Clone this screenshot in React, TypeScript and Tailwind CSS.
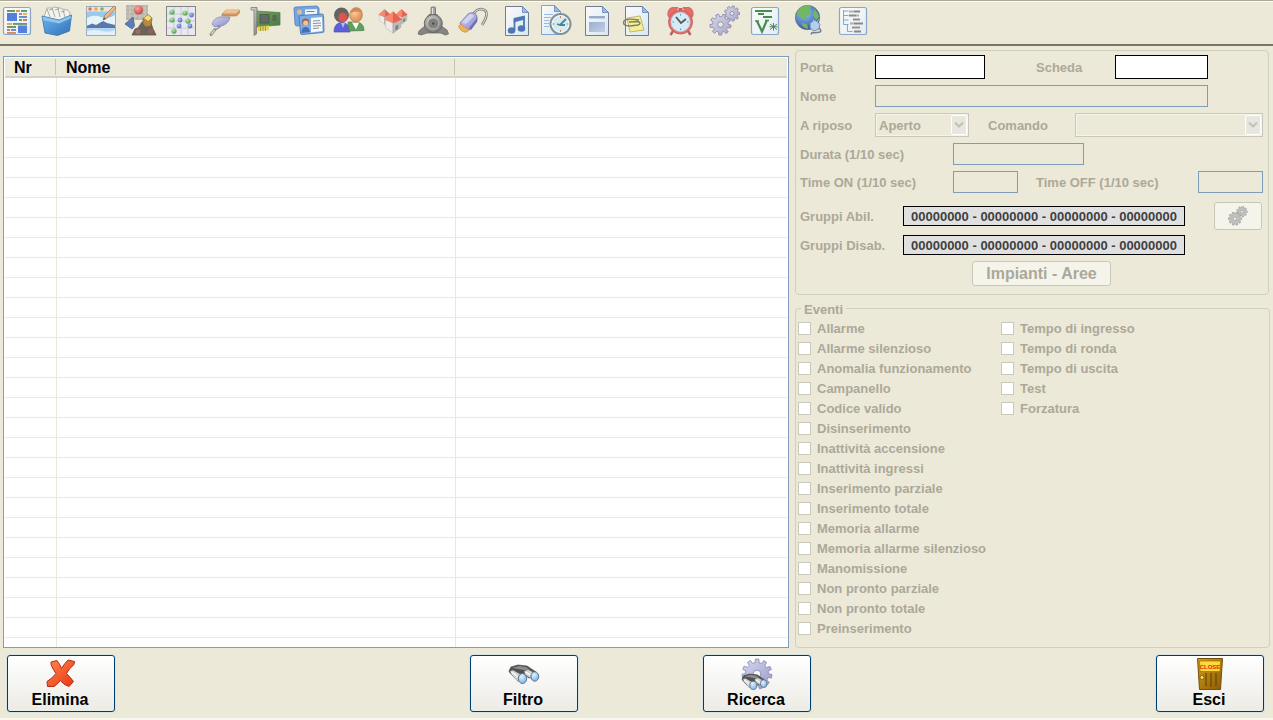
import React from 'react';

/* ---------- drawing helpers ---------- */

function gearPath(cx: number, cy: number, outer: number, inner: number, teeth: number, turn = 0): string {
  const points: string[] = [];
  const step = (Math.PI * 2) / teeth;
  for (let i = 0; i < teeth; i++) {
    const a = i * step + turn;
    const corners: [number, number][] = [
      [inner, a - step * 0.3],
      [outer, a - step * 0.2],
      [outer, a + step * 0.2],
      [inner, a + step * 0.3],
    ];
    for (const [r, t] of corners) {
      points.push(`${(cx + r * Math.cos(t)).toFixed(2)},${(cy + r * Math.sin(t)).toFixed(2)}`);
    }
  }
  return `M${points.join('L')}Z`;
}

type GearProps = { cx: number; cy: number; outer: number; inner: number; teeth: number; hole: number; fill: string; stroke: string; turn?: number };

function Gear({ cx, cy, outer, inner, teeth, hole, fill, stroke, turn }: GearProps) {
  const ring = `M${cx - hole},${cy}a${hole},${hole} 0 1,0 ${hole * 2},0a${hole},${hole} 0 1,0 ${-hole * 2},0Z`;
  return <path d={gearPath(cx, cy, outer, inner, teeth, turn) + ring} fill={fill} stroke={stroke} strokeWidth="0.9" fillRule="evenodd" strokeLinejoin="round" />;
}

function SharedGradients() {
  const stops = (id: string, a: string, b: string) => (
    <linearGradient id={id} x1="0" y1="0" x2="1" y2="1">
      <stop offset="0" stopColor={a} />
      <stop offset="1" stopColor={b} />
    </linearGradient>
  );
  const ball = (id: string, a: string, b: string) => (
    <radialGradient id={id} cx="0.38" cy="0.32" r="0.7">
      <stop offset="0" stopColor={a} />
      <stop offset="1" stopColor={b} />
    </radialGradient>
  );
  return (
    <svg width="0" height="0" className="absolute" aria-hidden="true">
      <defs>
        {stops('gPaper', '#ffffff', '#d4e6f8')}
        {stops('gFrame', '#ffffff', '#e0edfb')}
        {stops('gBox', '#58aef0', '#0f5cb4')}
        {stops('gGear', '#d8d8f0', '#9a9ac8')}
        {stops('gPurple', '#d0d2f8', '#7678c4')}
        {stops('gSteel', '#e4e4e4', '#707070')}
        {stops('gBoard', '#5a9a4c', '#2c6828')}
        {stops('gRed', '#ff8a50', '#e83410')}
        {stops('gDoor', '#d49c18', '#8a5c08')}
        {stops('gBlock', '#8ea4d0', '#bccbe8')}
        {ball('bRed', '#ff9a94', '#c02828')}
        {ball('bGreen', '#a8f0a0', '#2c9030')}
        {ball('bBlue', '#a4bcff', '#3450b0')}
        {ball('bGlobe', '#7cc0ff', '#1c3c9c')}
        {ball('bLens', '#e4f4ff', '#74b4f0')}
        {ball('bFace', '#ffc894', '#d87838')}
        {ball('bSteel', '#c8c8c8', '#686868')}
      </defs>
    </svg>
  );
}

function Page() {
  return (
    <>
      <path d="M3.5.5h17l6 6v23h-23z" fill="url(#gPaper)" stroke="#5c6a82" />
      <path d="M20.5.5v6h6z" fill="#8fb4e4" stroke="#4c74b4" strokeWidth="0.8" />
    </>
  );
}

function Frame() {
  return <rect x="1.5" y="1.5" width="27" height="27" rx="2" fill="url(#gFrame)" stroke="#7c9cc4" strokeWidth="1.2" />;
}

function House({ x, y, s }: { x: number; y: number; s: number }) {
  return (
    <g transform={`translate(${x} ${y}) scale(${s})`}>
      <path d="M-8 2v9l8 6V5z" fill="#ececec" stroke="#a0a0a0" strokeWidth="0.5" />
      <path d="M8 2v9l-8 6V5z" fill="#b4b4b4" stroke="#8c8c8c" strokeWidth="0.5" />
      <path d="M2.5 9.500l3-1.700v4.700l-3 1.800z" fill="#707070" />
      <path d="M0-6L-9.500 2.500 0 6.500z" fill="#f87860" />
      <path d="M0-6L9.500 2.500 0 6.500z" fill="#e44c3c" />
    </g>
  );
}

function Binoculars() {
  return (
    <>
      <path d="M0 6l2-4 7-2 9 1 9 6-1 4-6 2-4-3-4 4-5-1L1 8z" fill="#505050" stroke="#3a3a3a" strokeWidth="0.6" strokeLinejoin="round" />
      <path d="M3 3l7-2 7 1 4 3-6 0-6-1z" fill="#8c8c8c" />
      <path d="M1 6l3-1 8 4.500-3 7L2 9zM15 6l4-1.500 7 3.500-3 6-7-4z" fill="#d4d4d4" stroke="#606060" strokeWidth="0.5" />
      <path d="M2.500 7l6 4.500M16.500 7l5 3" stroke="#fff" strokeWidth="1.200" />
      <ellipse cx="13.500" cy="13.500" rx="4.200" ry="5" fill="url(#bLens)" stroke="#5c6470" strokeWidth="0.9" />
      <ellipse cx="25.800" cy="11.500" rx="3.900" ry="4.700" fill="url(#bLens)" stroke="#5c6470" strokeWidth="0.9" />
    </>
  );
}

/* ---------- toolbar icons, each on a 30 x 30 grid ---------- */

const bars = (list: [number, number, number, string][], h = 1.5) =>
  list.map(([x, y, w, c], i) => <rect key={i} x={x} y={y} width={w} height={h} fill={c} />);

const icons: Record<string, React.ReactNode> = {
  Pannello: (
    <>
      <Frame />
      {bars([[5, 4, 8, '#4c8850'], [14, 4, 4, '#e08038'], [19, 4, 6, '#4c8850'], [17, 7, 3, '#c06848'], [21, 7, 4, '#e8a838'], [17, 10, 8, '#5878c0'], [17, 13, 3, '#4c8850'], [21, 13, 4, '#c06848'], [5, 17, 5, '#e89838'], [11, 17, 14, '#588860'], [5, 20, 9, '#4c8850'], [5, 23, 3, '#c06848'], [9, 23, 5, '#5878c0'], [5, 26, 9, '#d87848']], 1.9)}
      <rect x="5" y="7" width="10" height="8" fill="#3c6cdc" />
      <rect x="16" y="19.500" width="9" height="7.500" fill="#3c6cdc" />
    </>
  ),
  Archivio: (
    <>
      <path d="M2 11l3-9 6 0 1-1 6 1 2 1 6 1 2 3-1 6-12 5z" fill="#f4f4f4" stroke="#999" strokeWidth="0.8" />
      <path d="M5 3l3 8M10 2l3 9M16 2l2 9M21 4l2 7M7 4l4-1M13 4l4-1M19 6l4-1" stroke="#8a8a8a" strokeWidth="0.8" fill="none" />
      <path d="M0 10l17 4 12.500-5-2 16-12 4.500L3 27z" fill="url(#gBox)" stroke="#1c5ca0" strokeWidth="0.8" />
      <path d="M.500 10.500l16.500 4 12-5-.400 3-11.600 5L1 14z" fill="#7cc0f4" />
    </>
  ),
  Grafica: (
    <>
      <rect x=".5" y=".5" width="29" height="29" fill="#8cc4f4" stroke="#8ca4bc" />
      <rect x="1" y="1" width="28" height="4.500" fill="#f0e4d0" />
      <path d="M1 12q7-4 14-1t14-2v10H1z" fill="#e8f6ff" />
      <path d="M1 20l5-2.500 4 1.500 7-4 4 2 8 2v4H1z" fill="#4464a4" />
      <path d="M1 22h28v7H1z" fill="#a8d4f8" />
      <path d="M1 25q8-2 15 0t13-1v5H1z" fill="#e0f2ff" />
      <circle cx="4" cy="3" r="1.700" fill="#e45440" />
      <circle cx="10" cy="3" r="1.700" fill="#f49438" />
      <circle cx="16" cy="3" r="1.700" fill="#58a848" />
      <path d="M17 14l2-5L28 0l2 2-9 10z" fill="#f0b078" stroke="#a06840" strokeWidth="0.8" />
      <path d="M17 14l1-3 2 2z" fill="#444" />
    </>
  ),
  Oggetti: (
    <>
      <rect x="0" y="-1" width="22" height="15" fill="#b0aca4" />
      <path d="M0 2h22M0 6h22M0 10h22M4-1v15M9-1v15M14-1v15M19-1v15" stroke="#ccc8c0" strokeWidth="0.8" />
      <circle cx="12.500" cy="4" r="4.600" fill="url(#bRed)" />
      <path d="M-1 18L7 11l1.500 9-2.500 3z" fill="#4868b8" stroke="#344878" strokeWidth="0.8" />
      <path d="M6 29l3-6 3-1 4-6 9 1 2 6 3 6z" fill="#544c48" stroke="#443c3c" strokeWidth="0.8" />
      <circle cx="12" cy="25.500" r="2.600" fill="#985048" />
      <circle cx="24.500" cy="25.500" r="2.600" fill="#884840" />
      <path d="M17 13l5-4.500L26 12l-1 8-5 1-3-3z" fill="#b07828" stroke="#604818" strokeWidth="0.7" />
      <path d="M18 12l4-3 3.500 3-3.500 3z" fill="#f8e058" />
    </>
  ),
  Mappa: (
    <>
      <rect x=".5" y=".5" width="29" height="29" fill="#e8e8f2" stroke="#74747c" />
      <path d="M1 8h28M1 15h28M1 22h28M8 1v28M15 1v28M22 1v28" stroke="#bcbcd0" strokeWidth="0.8" />
      {[[6, 6], [19, 7], [6, 14], [22, 15], [8, 25]].map(([x, y]) => <circle key={`${x}-${y}`} cx={x} cy={y} r="2.600" fill="url(#bGreen)" />)}
      {[[25.5, 9], [14, 14], [13, 20], [24, 20]].map(([x, y]) => <circle key={`${x}-${y}`} cx={x} cy={y} r="2.400" fill="url(#bBlue)" />)}
    </>
  ),
  Cantiere: (
    <>
      <path d="M12 8l4-4h13.500v3l-3 3H12z" fill="#c88850" stroke="#a87040" strokeWidth="0.6" />
      <path d="M16 4h13.500l-3.500 3.500H12.500z" fill="#f0b880" />
      <path d="M2 18q2-6 8-7l10 0q-1 6-7 8.500-6 2-9 1z" fill="url(#gPurple)" stroke="#787cac" strokeWidth="0.8" />
      <path d="M7 20q4-1 3 1l-5 3" stroke="#808080" strokeWidth="1.200" fill="none" />
      <path d="M5 23.500l-4 5" stroke="#888" strokeWidth="3" strokeLinecap="round" />
      <path d="M4.500 24l-3 4" stroke="#dcdcdc" strokeWidth="1.200" />
    </>
  ),
  Schede: (
    <>
      <path d="M6 5l24 1.500v12.500l-24 2z" fill="url(#gBoard)" stroke="#3c6434" strokeWidth="0.7" />
      <path d="M1 1.500h6v2.500l-.500 24-2.500 1.500V4H1z" fill="url(#gSteel)" stroke="#686868" strokeWidth="0.8" />
      <rect x="10" y="8.500" width="9" height="8.500" fill="#4c5450" stroke="#2c4028" strokeWidth="0.8" />
      <rect x="22.500" y="9" width="4" height="6" fill="#3c543c" />
      <path d="M8 20.500l11-1v4.500l-11 1z" fill="#e4d040" />
      <path d="M10.500 20v5M13 20v5M15.500 20v5" stroke="#8c7c20" strokeWidth="0.8" />
    </>
  ),
  Tessere: (
    <>
      <path d="M0 2.500Q0 1 2 1l21-1 2 2v16L3 20q-2 0-2-2z" fill="#5c98e4" stroke="#3c6cb0" strokeWidth="0.8" />
      <path d="M11 3.500l12-.500v12l-12 1z" fill="#f0f4fc" />
      <path d="M12.500 5.500h8" stroke="#6c7484" />
      <circle cx="5.500" cy="6" r="2.500" fill="#e0b088" />
      <path d="M5 11q0-1.500 1.500-1.500L28 8q1.500 0 1.500 1.500L30 25q0 1.500-1.500 1.500L8 28.500q-1.500 0-1.500-1.500z" fill="#68a4ec" stroke="#3464a8" strokeWidth="0.9" />
      <path d="M17 12l11-1 .500 14-11.500 1.500z" fill="#f8faff" />
      <path d="M19 15l7-.500M19 17.500l8-.500M19 20l8-.500M19 22.500l6-.500" stroke="#6c7484" strokeWidth="0.9" />
      <circle cx="11.500" cy="16" r="3.600" fill="#8c5030" />
      <circle cx="11.700" cy="17" r="2.600" fill="#f4bc8c" />
      <path d="M7.500 27q0-6 4-6t4.500 5z" fill="#2858b4" />
    </>
  ),
  Utenti: (
    <>
      <circle cx="7.500" cy="9" r="7.500" fill="#4c4c4c" />
      <ellipse cx="8.800" cy="11.500" rx="4.500" ry="5" fill="#d83c38" />
      <path d="M0 26q0-9 7.500-9.500 8 0 8.500 9.500z" fill="#4448e0" stroke="#343890" strokeWidth="0.7" />
      <path d="M7 17h4l-2 5z" fill="#a8b0ff" />
      <path d="M14 16l1 9 15-.500q0-8-8-8.500z" fill="#489448" stroke="#346834" strokeWidth="0.7" />
      <path d="M18 16.500l4 7 3-7z" fill="#fff" />
      <ellipse cx="22" cy="9" rx="6.300" ry="7.200" fill="url(#bFace)" stroke="#a86438" strokeWidth="0.7" />
      <path d="M16 7q1-5 6-5.500 5.500 0 6.500 5.500-6-3-12.500 0z" fill="#cc7c40" />
    </>
  ),
  Impianti: (
    <>
      <House x={6.5} y={7} s={0.66} />
      <House x={23.5} y={7} s={0.66} />
      <House x={15} y={11} s={0.95} />
    </>
  ),
  Sirene: (
    <>
      <path d="M0 28l1-3 7-6h14l7 5 1.500 4-3 1-5-2H9l-6 2z" fill="#747474" stroke="#585858" strokeWidth="0.8" />
      <rect x="13" y="1" width="4.500" height="8" rx="1" fill="#989898" stroke="#585858" strokeWidth="0.8" />
      <path d="M14.500 2v6" stroke="#e0e0e0" strokeWidth="1.200" />
      <path d="M8 12l3-4h8l3 4z" fill="#6c6c6c" />
      <circle cx="15.300" cy="17.500" r="9" fill="url(#bSteel)" stroke="#505050" />
      <circle cx="15.300" cy="17.500" r="5.600" fill="#707070" stroke="#bcbcbc" strokeWidth="0.9" />
      <circle cx="15.300" cy="17.500" r="1.200" fill="#303030" />
    </>
  ),
  Collegamento: (
    <>
      <path d="M15 9q3-6 8-6 6 .500 5.500 6-.500 4-4.500 10" stroke="#686868" strokeWidth="2.600" fill="none" />
      <path d="M15 9q3-6 8-6 6 .500 5.500 6-.500 4-4.500 10" stroke="#d0d0d0" strokeWidth="1.100" fill="none" />
      <path d="M2 17L10 8q3-2 6-1 4 2 3 6l-6 10q-5 3-9-1z" fill="url(#gPurple)" stroke="#5c5c98" strokeWidth="0.8" />
      <path d="M4 16l8-8q3 0 4 2l-8 8z" fill="#ccd0fa" />
      <path d="M11 22l8-10q1 2 0 4l-6 8z" fill="#5c5cb0" />
      <path d="M.500 20L3 18q3 4 7.500 5L9 26q-6 1-8.500-6z" fill="#f8a840" stroke="#c07820" strokeWidth="0.7" />
    </>
  ),
  Audio: (
    <>
      <Page />
      <path d="M12.500 13.500v11M22 11v11.500" stroke="#3464b0" strokeWidth="1.800" fill="none" />
      <path d="M11.600 12l11.300-2.500v4l-11.300 3z" fill="#3464b0" />
      <ellipse cx="9.500" cy="24.500" rx="3.800" ry="3.200" fill="#3464b0" />
      <ellipse cx="19.500" cy="22.500" rx="3.800" ry="3.200" fill="#3464b0" />
    </>
  ),
  Cronologia: (
    <>
      <path d="M-.500-.500h13l6 6v23h-19z" fill="url(#gPaper)" stroke="#6c98d4" />
      <path d="M12.500-.500v6h6z" fill="#8fb4e4" stroke="#4c74b4" strokeWidth="0.8" />
      <path d="M2 8.500h9M2 11.500h7M2 14.500h5M2 17.500h5M2 20.500h5" stroke="#88b4e8" />
      <circle cx="18.500" cy="18" r="10" fill="#d0ecfa" stroke="#70808c" strokeWidth="2" />
      <circle cx="18.500" cy="18" r="8.400" fill="none" stroke="#f8fcff" />
      <path d="M18.500 10v2M18.500 24v2M10.500 18h2M24.500 18h2" stroke="#d07048" />
      <path d="M24 13l-6 6-3-1M18 19h5" stroke="#287888" strokeWidth="1.800" fill="none" />
    </>
  ),
  Modello: (
    <>
      <Page />
      <rect x="7" y="10" width="16" height="2.500" fill="#8ca0cc" />
      <rect x="7" y="16" width="16" height="10" fill="url(#gBlock)" />
    </>
  ),
  Note: (
    <>
      <Page />
      <path d="M5 12l13-2 4 14-14 2z" fill="#f8f08c" stroke="#a8a048" strokeWidth="0.8" />
      <path d="M17 14q-13-2-15 1-2 5 6 5l8-1q4-2 0-3.500l-9 .500" stroke="#6c6c50" strokeWidth="1.400" fill="none" />
    </>
  ),
  Orari: (
    <>
      <path d="M7 25l-2.500 4M22 25l2.500 4" stroke="#a85050" strokeWidth="2.500" />
      <path d="M2 10q-1-7 4-8.500l6 0-7 12zM27 10q1-7-4-8.500l-6 0 7 12z" fill="#e85854" stroke="#b04444" strokeWidth="0.7" />
      <rect x="12.500" y="2" width="4" height="4" fill="#c84444" />
      <circle cx="14.500" cy="16" r="12" fill="#e45854" stroke="#b84444" strokeWidth="0.8" />
      <circle cx="14.500" cy="16" r="9.700" fill="#d0ecfc" stroke="#a8c4d4" strokeWidth="0.8" />
      <path d="M10 11l5 6 5-4" stroke="#344450" strokeWidth="1.900" fill="none" />
      <path d="M14.500 8v1.500M14.500 22.500v1.500M6.500 16H8M21 16h1.500" stroke="#6c7c88" />
    </>
  ),
  Impostazioni: (
    <>
      <Gear cx={22} cy={7.5} outer={7.6} inner={5.8} teeth={9} hole={2} fill="url(#gGear)" stroke="#7c7ca8" />
      <Gear cx={10.5} cy={18.5} outer={10.6} inner={7.8} teeth={9} hole={2.8} fill="url(#gGear)" stroke="#7c7ca8" turn={0.2} />
    </>
  ),
  Variabili: (
    <>
      <Frame />
      {bars([[5, 4, 17, '#2c7c38'], [8, 7, 6, '#2c7c38'], [13, 10, 9, '#2c7c38']], 2)}
      <path d="M7 15l5 10.500 5-11.500" stroke="#2c7c38" strokeWidth="2.200" fill="none" />
      <path d="M5 15h4M15 14.500h4" stroke="#2c7c38" strokeWidth="1.300" />
      <path d="M23.500 17v7.500M20 18l7 5.500M27 18l-7 5.500M19.500 20.700h8" stroke="#2c7c38" />
    </>
  ),
  Rete: (
    <>
      <circle cx="13.500" cy="11.500" r="12.200" fill="url(#bGlobe)" stroke="#485878" strokeWidth="0.6" />
      <path d="M7 1q5-3 10-1l-2 4 2 3-4 3-2 4-4-3-4-1q0-6 4-9zM20 3q4 3 5 8l-3 3-3-5zM7 17l6 1 1 5q-5-1-7-6z" fill="#5cb04c" />
      <path d="M16 17l5-3 5 4-1 5-5 2-4-3z" fill="#a8ccec" stroke="#486c98" strokeWidth="0.8" />
      <path d="M19 16l1-3M23 16l2-3" stroke="#b0b0b0" />
      <path d="M25 22q3 3 1 4-4 1-8 .500l-1 2" stroke="#587088" strokeWidth="1.500" fill="none" />
    </>
  ),
  Struttura: (
    <>
      <Frame />
      <path d="M5.500 4v14.500h5M5.500 5h5M5.500 9.500h5M5.500 14h5M9.500 18v7.500h5" stroke="#6c9cd8" fill="none" />
      {bars([[11, 4.5, 5, '#a8a8a8'], [16, 4.5, 6, '#787878'], [11, 8.5, 7, '#787878'], [18, 8.5, 3, '#a8a8a8'], [15, 12.5, 7, '#808080'], [12, 16.5, 4, '#a8a8a8'], [16, 16.5, 9, '#787878'], [14, 20.5, 8, '#888888'], [16, 24.5, 7, '#787878']], 2)}
    </>
  ),
};

const toolbarGroups: string[][] = [
  ['Pannello', 'Archivio'],
  ['Grafica', 'Oggetti', 'Mappa'],
  ['Cantiere', 'Schede'],
  ['Tessere', 'Utenti'],
  ['Impianti', 'Sirene', 'Collegamento'],
  ['Audio', 'Cronologia', 'Modello', 'Note'],
  ['Orari'],
  ['Impostazioni', 'Variabili'],
  ['Rete'],
  ['Struttura'],
];

function Toolbar() {
  return (
    <header className="flex h-[46px] shrink-0 gap-[14px] border-t border-b-2 border-t-[#aca899] border-b-[#7c7566] pt-[5px] pl-[2px] shadow-[inset_0_1px_0_#ffffff]">
      {toolbarGroups.map((group) => (
        <div key={group[0]} className="flex gap-[10px]">
          {group.map((name) => (
            <button key={name} type="button" aria-label={name} className="size-[30px]">
              <svg viewBox="0 0 30 30" className="size-[30px] overflow-visible opacity-85" aria-hidden="true">
                {icons[name]}
              </svg>
            </button>
          ))}
        </div>
      ))}
    </header>
  );
}

/* ---------- list of outputs ---------- */

function HeaderCell({ children }: { children: string }) {
  return (
    <th className="h-5 border-b-2 border-[#d6d2c2] p-0">
      <div className="mr-px flex h-4 items-center border-r border-[#c7c5b2] pt-[2px] pl-[9px]">{children}</div>
    </th>
  );
}

function OutputTable() {
  const rows = Array.from({ length: 29 }, (_, i) => i);
  return (
    <section className="mt-[10px] min-w-0 flex-1 overflow-hidden border border-[#7f9db9] bg-white p-px">
      <table className="w-full table-fixed border-separate border-spacing-0 text-left text-base leading-4 font-bold">
        <colgroup>
          <col className="w-[52px]" />
          <col className="w-[399px]" />
          <col />
        </colgroup>
        <thead>
          <tr className="h-5 bg-[#ebeadb]">
            <HeaderCell>Nr</HeaderCell>
            <HeaderCell>Nome</HeaderCell>
            <th className="h-5 border-b-2 border-[#d6d2c2] p-0" aria-label="Dettagli" />
          </tr>
        </thead>
        <tbody>
          {rows.map((row) => (
            <tr key={row} className="h-5">
              <td className="border-r border-b border-[#ece9d8] p-0" />
              <td className="border-r border-b border-[#ece9d8] p-0" />
              <td className="border-b border-[#ece9d8] p-0" />
            </tr>
          ))}
        </tbody>
      </table>
    </section>
  );
}

/* ---------- output settings ---------- */

type FieldProps = { id: string; label: string; labelClass: string; inputClass: string };

function Field({ id, label, labelClass, inputClass }: FieldProps) {
  return (
    <>
      <label htmlFor={id} className={`shrink-0 ${labelClass}`}>{label}</label>
      <input id={id} type="text" className={`min-w-0 border ${inputClass}`} />
    </>
  );
}

function Dropdown({ id, options, className }: { id: string; options: string[]; className: string }) {
  return (
    <div className={`relative h-6 ${className}`}>
      <select id={id} disabled className="h-6 w-full appearance-none border border-[#c9c7ba] bg-transparent pt-[2px] pl-[3px] text-[#aca899] opacity-100 shadow-[inset_0_0_0_1px_#f5f4ea]">
        {options.map((option) => <option key={option}>{option}</option>)}
      </select>
      <span className="pointer-events-none absolute inset-y-[2px] right-[2px] flex w-4 items-center justify-center rounded-[2px] border border-white bg-[#e8e7df]">
        <svg viewBox="0 0 10 8" className="h-2 w-[10px]" aria-hidden="true">
          <path d="M1 1.500l4 4 4-4" fill="none" stroke="#c4c2b6" strokeWidth="2.200" />
        </svg>
      </span>
    </div>
  );
}

const enabledInput = 'h-6 border-black bg-white px-1 text-black';
const disabledInput = 'h-[22px] border-[#7f9db9] bg-transparent px-1';
const maskInput = 'h-5 w-[282px] border border-black bg-[#e0e0e0] text-center text-[#404040]';
const emptyMask = '00000000 - 00000000 - 00000000 - 00000000';

function SettingsPanel() {
  return (
    <form className="mr-px rounded-[4px] border border-[#d0d0bf] pt-1 pr-[5px] pb-[8px] pl-1 [&_label]:pt-[2px]">
      <div className="flex flex-col gap-[6px]">
        <div className="flex items-center">
          <Field id="porta" label="Porta" labelClass="w-[75px]" inputClass={`w-[110px] ${enabledInput}`} />
          <Field id="scheda" label="Scheda" labelClass="ml-[51px] w-[79px]" inputClass={`w-[93px] ${enabledInput}`} />
        </div>
        <div className="flex items-center">
          <Field id="nome" label="Nome" labelClass="w-[75px]" inputClass={`mr-[55px] flex-1 ${disabledInput}`} />
        </div>
        <div className="flex items-center">
          <label htmlFor="riposo" className="w-[75px]">A riposo</label>
          <Dropdown id="riposo" options={['Aperto', 'Chiuso']} className="w-[94px]" />
          <label htmlFor="comando" className="ml-[19px] w-[87px]">Comando</label>
          <Dropdown id="comando" options={['']} className="flex-1" />
        </div>
        <div className="flex items-center">
          <Field id="durata" label="Durata (1/10 sec)" labelClass="w-[153px]" inputClass={`w-[131px] ${disabledInput}`} />
        </div>
        <div className="flex items-center">
          <Field id="time-on" label="Time ON (1/10 sec)" labelClass="w-[153px]" inputClass={`w-[65px] ${disabledInput}`} />
          <Field id="time-off" label="Time OFF (1/10 sec)" labelClass="ml-[18px] w-[162px]" inputClass={`w-[65px] ${disabledInput}`} />
        </div>
      </div>
      <div className="mt-[9px] flex flex-col gap-[5px]">
        <div className="flex h-7 items-center">
          <label htmlFor="gruppi-abil" className="w-[103px]">Gruppi Abil.</label>
          <input id="gruppi-abil" readOnly value={emptyMask} className={maskInput} />
          <button type="button" disabled aria-label="Configura gruppi" className="mr-px ml-auto flex h-7 w-12 items-center justify-center rounded-[3px] border border-[#c9c7ba] bg-[#f5f4ea]">
            <svg viewBox="0 0 30 30" className="size-[20px]" aria-hidden="true">
              <Gear cx={21} cy={8.5} outer={8} inner={6.3} teeth={9} hole={2} fill="#c0c0c0" stroke="#989898" />
              <Gear cx={10.5} cy={19} outer={10} inner={8} teeth={10} hole={2.5} fill="#c0c0c0" stroke="#989898" />
            </svg>
          </button>
        </div>
        <div className="flex h-5 items-center">
          <label htmlFor="gruppi-disab" className="w-[103px]">Gruppi Disab.</label>
          <input id="gruppi-disab" readOnly value={emptyMask} className={maskInput} />
        </div>
        <button type="button" disabled className="mt-px ml-[172px] h-[25px] w-[139px] rounded-[3px] border border-[#c9c7ba] bg-[#f5f4ea] text-base leading-5 text-[#aca899]">
          Impianti - Aree
        </button>
      </div>
    </form>
  );
}

const events = [
  'Allarme', 'Allarme silenzioso', 'Anomalia funzionamento', 'Campanello', 'Codice valido', 'Disinserimento',
  'Inattività accensione', 'Inattività ingressi', 'Inserimento parziale', 'Inserimento totale', 'Memoria allarme',
  'Memoria allarme silenzioso', 'Manomissione', 'Non pronto parziale', 'Non pronto totale', 'Preinserimento',
  'Tempo di ingresso', 'Tempo di ronda', 'Tempo di uscita', 'Test', 'Forzatura',
];

function EventsPanel() {
  return (
    <fieldset className="mt-[3px] flex-1 rounded-[4px] border border-[#d0d0bf] pl-[2px]">
      <legend className="ml-[3px] px-[3px] pt-1 leading-4">Eventi</legend>
      <div className="grid auto-cols-[203px] grid-flow-col grid-rows-[repeat(16,20px)]">
        {events.map((name) => (
          <label key={name} className="flex items-center gap-[6px] whitespace-nowrap">
            <input type="checkbox" disabled className="size-[13px] shrink-0 appearance-none border border-[#cac8bb] bg-white" />
            <span className="pt-[2px]">{name}</span>
          </label>
        ))}
      </div>
    </fieldset>
  );
}

/* ---------- bottom actions ---------- */

const actionIcons: Record<string, React.ReactNode> = {
  Elimina: (
    <path d="M5 3l6-1.500q3 4 4.500 8 3-5 6.500-8.500l6.500 1.500-.500 3q-5 4-7.500 9 4 4 7 8l-4.500 5q-6-2-8.500-6-4 4.500-6.500 6l-6.500 0-.500-5q5-3 9-8-3-4-5-9z" fill="url(#gRed)" stroke="#b42c14" strokeLinejoin="round" />
  ),
  Filtro: (
    <g transform="translate(0 6)">
      <Binoculars />
    </g>
  ),
  Ricerca: (
    <>
      <Gear cx={15} cy={15} outer={15} inner={11.5} teeth={11} hole={3.8} fill="url(#gGear)" stroke="#8c8cbc" turn={0.15} />
      <g transform="translate(0 15) scale(0.84)">
        <Binoculars />
      </g>
    </>
  ),
  Esci: (
    <>
      <path d="M2.500-.500h25l-2 31h-21z" fill="url(#gDoor)" stroke="#74500c" />
      <path d="M4.500 2h21l-.600 10.500H5.100z" fill="#ffd83c" stroke="#a87808" strokeWidth="0.8" />
      <text x="15" y="9.500" textAnchor="middle" fontSize="6" fontWeight="700" fontFamily="Liberation Sans, sans-serif" fill="#e02810">CLOSE</text>
      <path d="M11 14v13M16 14v14M21 14v13" stroke="#5c3c08" />
      <circle cx="7" cy="18.500" r="2" fill="#ffe060" stroke="#6c4808" strokeWidth="0.7" />
    </>
  ),
};

function ActionButton({ name }: { name: string }) {
  return (
    <button type="button" className="flex h-[57px] w-[108px] shrink-0 flex-col items-center rounded-[3px] border border-[#003c74] bg-linear-to-b from-white to-[#ecebe5] pt-[3px] text-base leading-4 font-bold text-black shadow-[0_0_0_1px_#d6e4e4]">
      <svg viewBox="0 0 30 30" className="size-[30px] overflow-visible" aria-hidden="true">
        {actionIcons[name]}
      </svg>
      <span className="mt-[3px] pr-[2px]">{name}</span>
    </button>
  );
}

function ActionBar() {
  return (
    <footer className="flex shrink-0 border-b-2 border-[#f8f7f0] pt-[7px] pr-[9px] pb-[6px] pl-[7px]">
      <ActionButton name="Elimina" />
      <div className="grow-[355]" />
      <ActionButton name="Filtro" />
      <div className="grow-[125]" />
      <ActionButton name="Ricerca" />
      <div className="grow-[345]" />
      <ActionButton name="Esci" />
    </footer>
  );
}

export default function App() {
  return (
    <div className="flex h-screen flex-col overflow-hidden bg-[#ece9d8] font-['Liberation_Sans',Arial,sans-serif] text-black">
      <SharedGradients />
      <Toolbar />
      <main className="flex min-h-0 flex-1 gap-[6px] px-[3px]">
        <OutputTable />
        <aside className="flex w-[475px] shrink-0 flex-col pt-1 text-[13px] leading-4 font-bold text-[#aca899]">
          <SettingsPanel />
          <EventsPanel />
        </aside>
      </main>
      <ActionBar />
    </div>
  );
}
